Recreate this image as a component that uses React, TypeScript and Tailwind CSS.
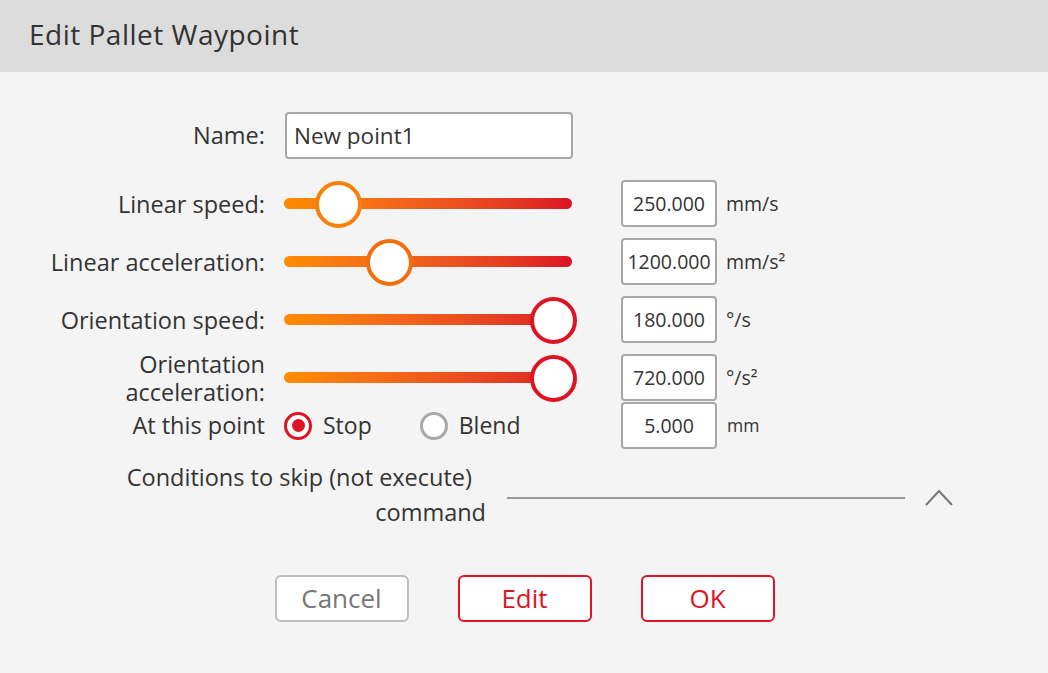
import React from "react";

const FONT = { fontFamily: '"Open Sans", "Noto Sans", sans-serif' };

function Slider({ center, color }: { center: number; color: string }) {
  return (
    <div className="relative flex h-[46px] w-[288px] items-center">
      <div className="h-[11px] w-full rounded-full bg-gradient-to-r from-[#ff8c00] to-[#db0f24]" />
      <div
        className="absolute top-0 h-[47px] w-[47px] rounded-full border-[4px] bg-white"
        style={{ left: center - 23.5, borderColor: color }}
      />
    </div>
  );
}

function ValueBox({ value }: { value: string }) {
  return (
    <div className="flex h-[47px] w-[96px] items-center justify-center rounded-[4px] border-2 border-[#a8a8a8] bg-white text-[19.5px] text-[#333]">
      {value}
    </div>
  );
}

function SliderRow({
  label,
  center,
  color,
  value,
  unit,
  className = "",
}: {
  label: React.ReactNode;
  center: number;
  color: string;
  value: string;
  unit: React.ReactNode;
  className?: string;
}) {
  return (
    <div className={`flex h-[47px] items-center ${className}`}>
      <div className="w-[265px] text-right text-[23.5px] leading-[28px] text-[#333]">{label}</div>
      <div className="ml-[19px]">
        <Slider center={center} color={color} />
      </div>
      <div className="ml-[49px]">
        <ValueBox value={value} />
      </div>
      <div className="ml-[9px] text-[19.5px] text-[#333]">{unit}</div>
    </div>
  );
}

export default function App() {
  return (
    <div className="flex h-[673px] w-[1048px] flex-col bg-[#f4f4f4]" style={FONT}>
      <div className="flex h-[72px] items-center bg-[#dcdcdc] pb-[5px] pl-[29px] text-[28px] tracking-[0.5px] text-[#333]">
        Edit Pallet Waypoint
      </div>
      <div className="flex flex-col pt-[40px]">
        <div className="flex h-[47px] items-center">
          <div className="w-[265px] text-right text-[23.5px] text-[#333]">Name:</div>
          <div className="ml-[20px] flex h-[47px] w-[288px] items-center rounded-[4px] border-2 border-[#a8a8a8] bg-white pl-[7px] text-[22.5px] text-[#333]">
            New point1
          </div>
        </div>
        <SliderRow className="mt-[21px]" label="Linear speed:" center={54} color="#f6800a" value="250.000" unit="mm/s" />
        <SliderRow className="mt-[11px]" label="Linear acceleration:" center={105} color="#f2700c" value="1200.000" unit="mm/s²" />
        <SliderRow className="mt-[11px]" label="Orientation speed:" center={269} color="#dc1424" value="180.000" unit="°/s" />
        <SliderRow
          className="mt-[11px]"
          label={
            <>
              Orientation
              <br />
              acceleration:
            </>
          }
          center={269}
          color="#dc1424"
          value="720.000"
          unit="°/s²"
        />
        <div className="mt-[1px] flex h-[47px] items-center">
          <div className="w-[265px] text-right text-[23.5px] text-[#333]">At this point</div>
          <div className="ml-[19px] flex w-[288px] items-center">
            <div className="flex h-[28px] w-[28px] items-center justify-center rounded-full border-[3px] border-[#dc1424] bg-white">
              <div className="h-[13px] w-[13px] rounded-full bg-[#dc1424]" />
            </div>
            <span className="ml-[11px] text-[23px] text-[#333]">Stop</span>
            <div className="ml-[48px] h-[28px] w-[28px] rounded-full border-[3px] border-[#a8a8a8] bg-white" />
            <span className="ml-[11px] text-[23px] text-[#333]">Blend</span>
          </div>
          <div className="ml-[49px]">
            <ValueBox value="5.000" />
          </div>
          <div className="ml-[10px] text-[17.5px] text-[#333]">mm</div>
        </div>
        <div className="mt-[11px] flex items-center">
          <div className="w-[486px] text-right text-[23.5px] leading-[35px] text-[#333]">
            <div className="pr-[14px]">Conditions to skip (not execute)</div>
            <div>command</div>
          </div>
          <div className="ml-[21px] mt-[6px] h-[2px] w-[398px] bg-[#9a9a9a]" />
          <svg className="ml-[20px] mt-[4px]" width="28" height="17" viewBox="0 0 28 17">
            <path d="M1 16 L14 2 L27 16" fill="none" stroke="#777" strokeWidth="2" />
          </svg>
        </div>
        <div className="mt-[45px] flex justify-center gap-[49px] pl-[1px]">
          <button className="h-[47px] w-[134px] rounded-[6px] border-2 border-[#bdbdbd] bg-white text-[26px] text-[#777]">
            Cancel
          </button>
          <button className="h-[47px] w-[134px] rounded-[6px] border-2 border-[#dc1424] bg-white text-[26px] text-[#dc1424]">
            Edit
          </button>
          <button className="h-[47px] w-[134px] rounded-[6px] border-2 border-[#dc1424] bg-white text-[26px] text-[#dc1424]">
            OK
          </button>
        </div>
      </div>
    </div>
  );
}
